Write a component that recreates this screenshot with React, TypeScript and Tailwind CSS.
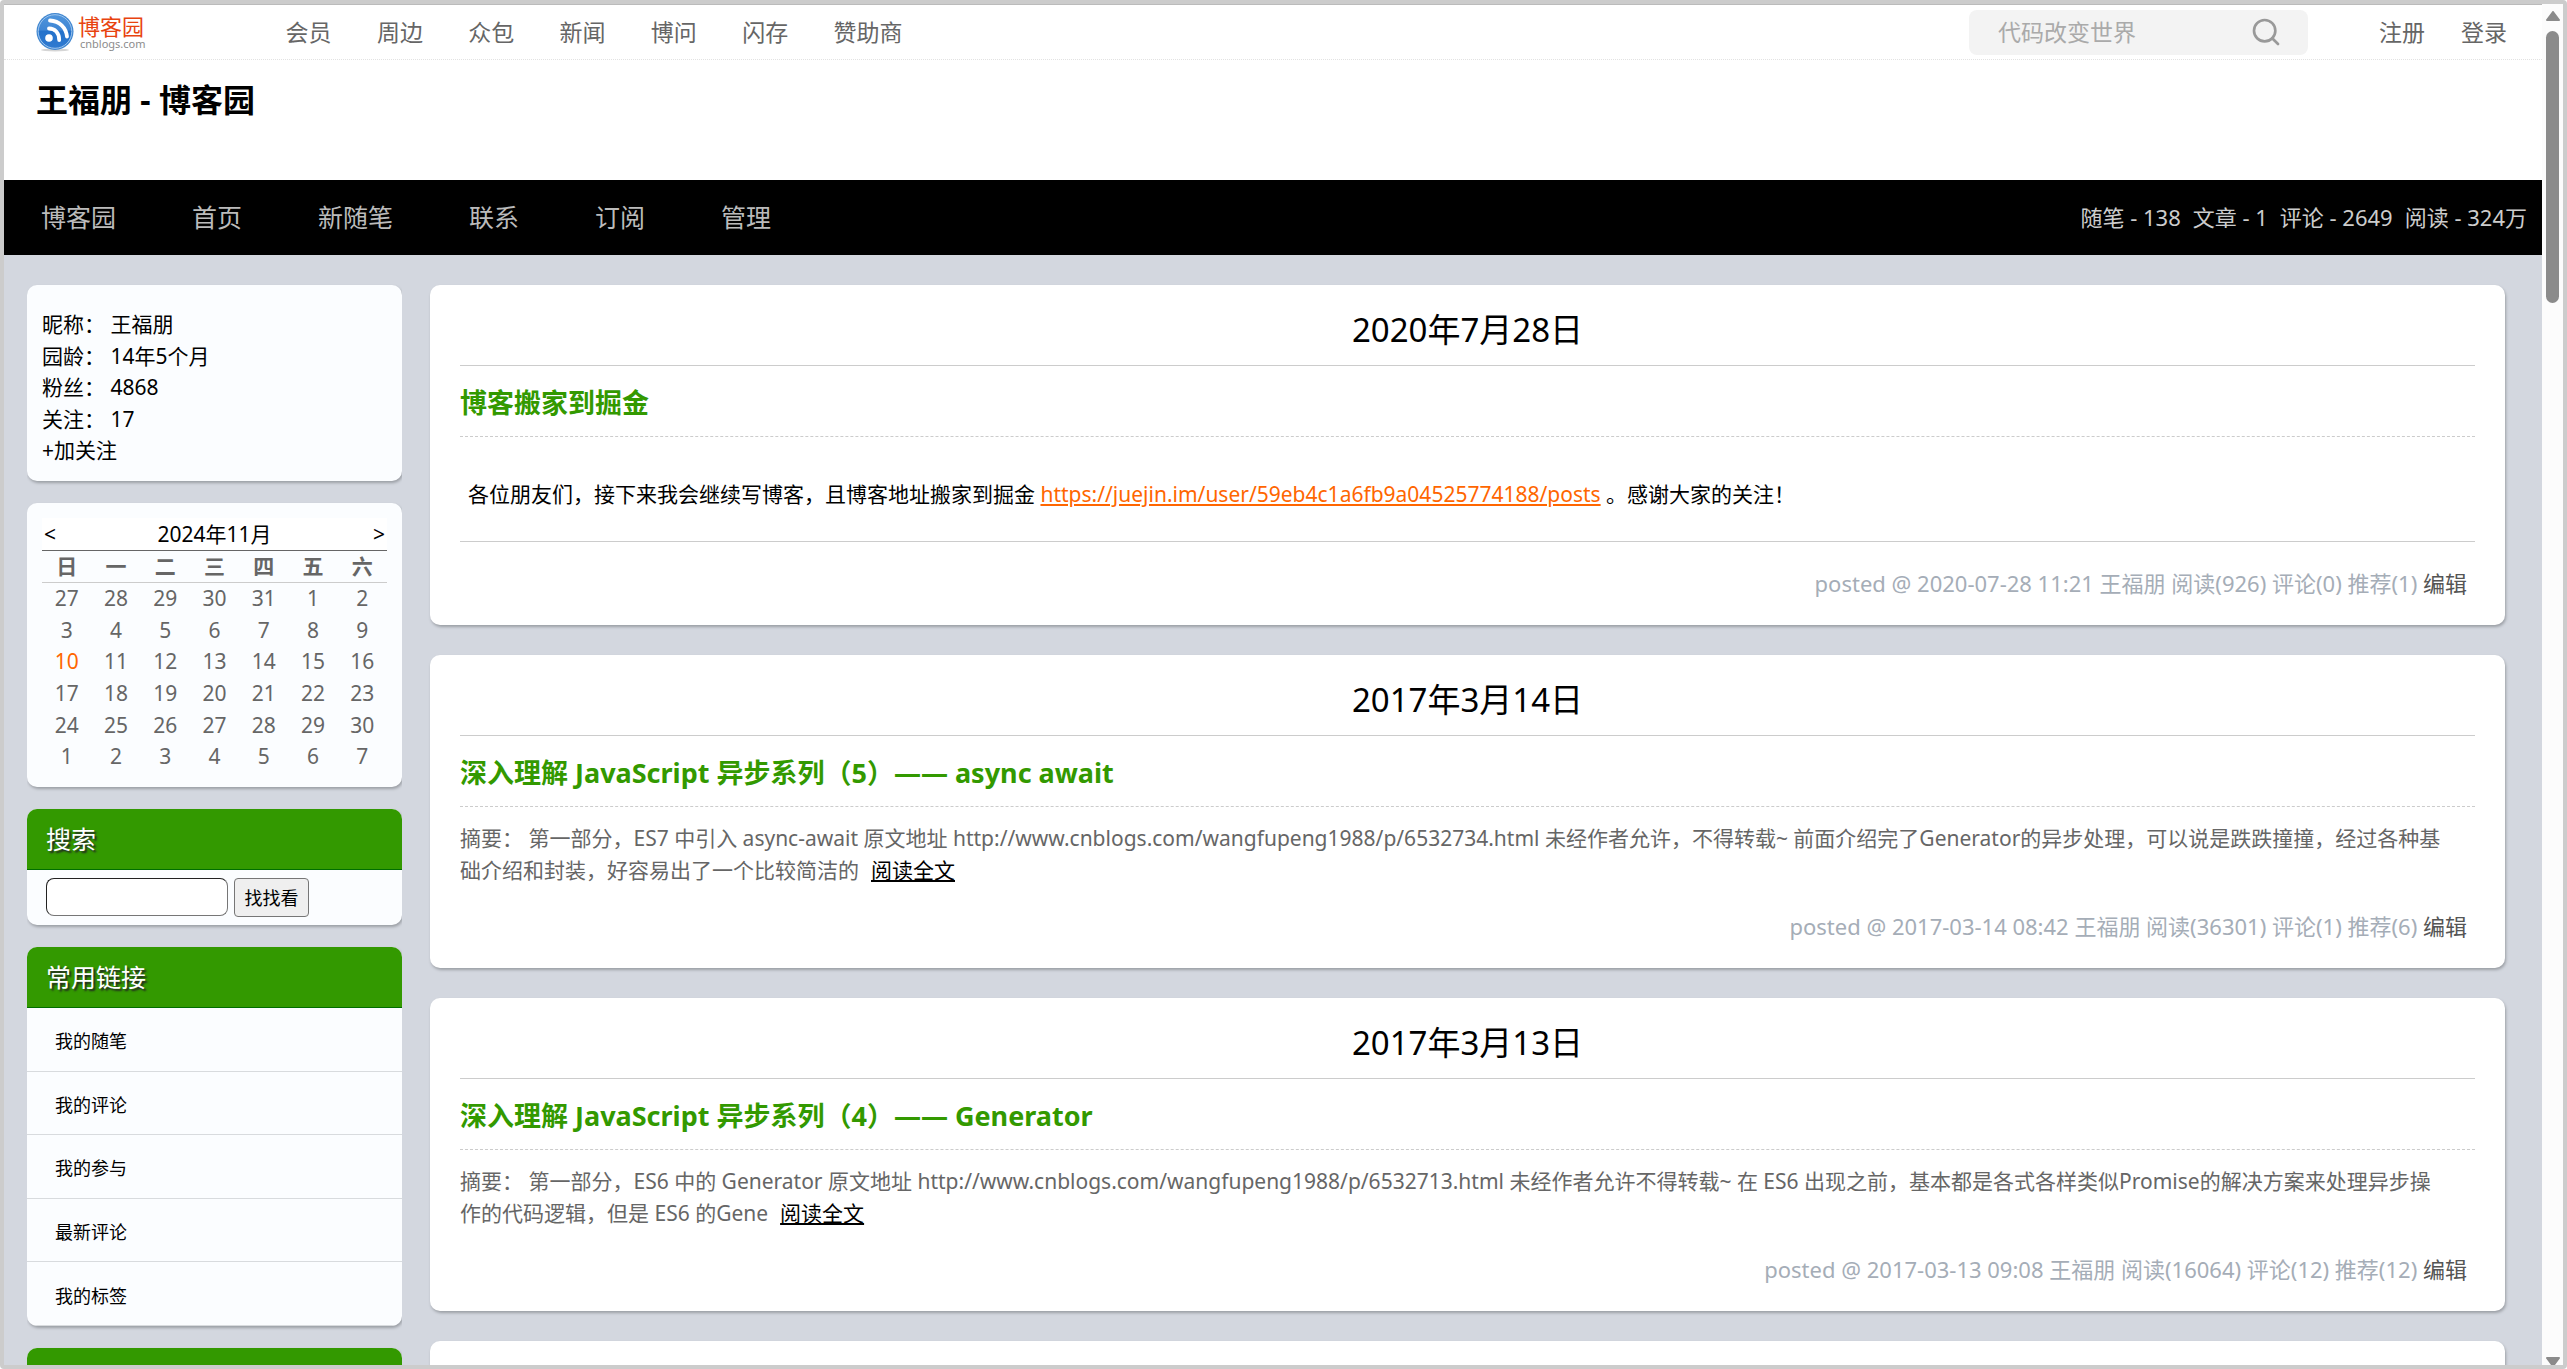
import { Search } from "lucide-react"

const topLinks = ["会员", "周边", "众包", "新闻", "博问", "闪存", "赞助商"]
const navLinks = ["博客园", "首页", "新随笔", "联系", "订阅", "管理"]
const weekdays = ["日", "一", "二", "三", "四", "五", "六"]
const weeks = [
  [27, 28, 29, 30, 31, 1, 2],
  [3, 4, 5, 6, 7, 8, 9],
  [10, 11, 12, 13, 14, 15, 16],
  [17, 18, 19, 20, 21, 22, 23],
  [24, 25, 26, 27, 28, 29, 30],
  [1, 2, 3, 4, 5, 6, 7],
]
const commonLinks = ["我的随笔", "我的评论", "我的参与", "最新评论", "我的标签"]
const profile = [
  ["昵称", "王福朋"],
  ["园龄", "14年5个月"],
  ["粉丝", "4868"],
  ["关注", "17"],
]

type Post = {
  date: string
  title: string
  summary?: string
  footer: string
}

const posts: Post[] = [
  {
    date: "2020年7月28日",
    title: "博客搬家到掘金",
    footer: "posted @ 2020-07-28 11:21 王福朋 阅读(926) 评论(0) 推荐(1)",
  },
  {
    date: "2017年3月14日",
    title: "深入理解 JavaScript 异步系列（5）—— async await",
    summary:
      "摘要： 第一部分，ES7 中引入 async-await 原文地址 http://www.cnblogs.com/wangfupeng1988/p/6532734.html 未经作者允许，不得转载~ 前面介绍完了Generator的异步处理，可以说是跌跌撞撞，经过各种基础介绍和封装，好容易出了一个比较简洁的",
    footer: "posted @ 2017-03-14 08:42 王福朋 阅读(36301) 评论(1) 推荐(6)",
  },
  {
    date: "2017年3月13日",
    title: "深入理解 JavaScript 异步系列（4）—— Generator",
    summary:
      "摘要： 第一部分，ES6 中的 Generator 原文地址 http://www.cnblogs.com/wangfupeng1988/p/6532713.html 未经作者允许不得转载~ 在 ES6 出现之前，基本都是各式各样类似Promise的解决方案来处理异步操作的代码逻辑，但是 ES6 的Gene",
    footer: "posted @ 2017-03-13 09:08 王福朋 阅读(16064) 评论(12) 推荐(12)",
  },
]

function Logo() {
  return (
    <a href="#" className="flex items-center gap-1">
      <svg width="38" height="40" viewBox="0 0 38 40" className="shrink-0">
        <defs>
          <linearGradient id="ball" x1="0" y1="0" x2="0" y2="1">
            <stop offset="0" stopColor="#4f95dc" />
            <stop offset="0.45" stopColor="#3f86d4" />
            <stop offset="0.5" stopColor="#2472cb" />
            <stop offset="1" stopColor="#2f7ad0" />
          </linearGradient>
        </defs>
        <ellipse cx="19" cy="38" rx="14" ry="1.4" fill="#d5d5d5" />
        <circle cx="19" cy="19.5" r="18.5" fill="#3f86d0" />
        <circle cx="19" cy="19.5" r="16.8" fill="url(#ball)" stroke="#a9cdf0" strokeWidth="0.9" />
        <circle cx="13" cy="26" r="3.8" fill="#fff" />
        <path d="M13 16.5c5.8 0 10.2 4.2 10.2 11.5" fill="none" stroke="#fff" strokeWidth="3.8" strokeLinecap="round" />
        <path d="M14 8.5c9.5 0.500 16 7 17 16" fill="none" stroke="#fff" strokeWidth="3.8" strokeLinecap="round" />
      </svg>
      <span className="flex flex-col">
        <span className="text-[22px] leading-6 text-[#e8430f]">博客园</span>
        <span className="pl-0.5 text-[11px] leading-3 text-[#8c8c8c]">cnblogs.com</span>
      </span>
    </a>
  )
}

function TopBar() {
  return (
    <div className="flex h-[55px] items-center border-b border-dotted border-[#e2e2e2] pr-[35px] pl-8 text-[23px] text-[#666]">
      <Logo />
      <nav className="ml-[140px] flex w-[617px] justify-between">
        {topLinks.map((name) => (
          <a key={name} href="#">{name}</a>
        ))}
      </nav>
      <form className="mr-[71px] ml-auto flex h-[45px] w-[339px] items-center rounded-lg bg-[#f3f3f3] pr-[26px] pl-[29px]">
        <input
          aria-label="代码改变世界"
          placeholder="代码改变世界"
          className="min-w-0 flex-1 bg-transparent outline-none placeholder:text-[#aaa]"
        />
        <button type="button" aria-label="搜索">
          <Search className="h-8 w-8 text-[#999]" strokeWidth={2} />
        </button>
      </form>
      <div className="flex gap-9">
        <a href="#">注册</a>
        <a href="#">登录</a>
      </div>
    </div>
  )
}

function NavBar() {
  return (
    <div className="flex h-[75px] items-center justify-between bg-black pr-[15px] pl-[37px]">
      <nav className="flex gap-[76px] text-[25px] text-[#bbb]">
        {navLinks.map((name) => (
          <a key={name} href="#">{name}</a>
        ))}
      </nav>
      <div className="flex gap-3 text-[22px] text-[#ccc]">
        <span>随笔 - 138</span>
        <span>文章 - 1</span>
        <span>评论 - 2649</span>
        <span>阅读 - 324万</span>
      </div>
    </div>
  )
}

const cardShadow = "shadow-[1px_2px_3px_#9b9fa5]"

function SideHeading({ children }: { children?: string }) {
  return (
    <h3 className="h-[61px] border-b border-[#006e00] bg-[#339900] pl-[19px] text-[25px] leading-[60px] text-white [text-shadow:2px_2px_2px_#222]">
      {children}
    </h3>
  )
}

function Calendar() {
  return (
    <div className={`rounded-[10px] bg-[#fbfdff] p-[15px] ${cardShadow}`}>
      <table className="h-[254px] w-full table-fixed border-collapse text-center text-[21px] leading-7 text-[#666]">
        <thead>
          <tr className="h-8 border-b border-[#666] bg-white text-black">
            <td className="pl-0.5 text-left"><a href="#">&lt;</a></td>
            <td colSpan={5}>2024年11月</td>
            <td className="pr-0.5 text-right"><a href="#">&gt;</a></td>
          </tr>
          <tr className="h-8 border-b border-[#ccc]">
            {weekdays.map((day) => (
              <th key={day} className="font-bold">{day}</th>
            ))}
          </tr>
        </thead>
        <tbody>
          {weeks.map((week, i) => (
            <tr key={i}>
              {week.map((day) => (
                <td key={day} className={i === 2 && day === 10 ? "text-[#ff6600]" : ""}>{day}</td>
              ))}
            </tr>
          ))}
        </tbody>
      </table>
    </div>
  )
}

function Sidebar() {
  return (
    <aside className="flex w-[375px] shrink-0 flex-col gap-[22px] overflow-x-clip">
      <div className={`rounded-[10px] bg-[#fbfdff] px-[15px] pt-6 pb-3.5 ${cardShadow}`}>
        <ul className="grid h-[158px] text-[21px] leading-[31px]">
          {profile.map(([label, value]) => (
            <li key={label}>{label}： <a href="#">{value}</a></li>
          ))}
          <li><a href="#">+加关注</a></li>
        </ul>
      </div>

      <Calendar />

      <div className={`overflow-hidden rounded-[10px] bg-[#fbfdff] ${cardShadow}`}>
        <SideHeading>搜索</SideHeading>
        <form className="flex gap-1.5 px-[19px] py-2">
          <input
            aria-label="搜索"
            className="h-[38px] w-[182px] rounded-lg border border-[#767676] border-t-[#222] border-l-[#222] bg-white px-2 text-lg"
          />
          <button type="button" className="h-[39px] w-[75px] rounded-[4px] border border-[#767676] bg-[#efefef] text-lg leading-9">
            找找看
          </button>
        </form>
      </div>

      <div className={`overflow-hidden rounded-[10px] bg-[#fbfdff] ${cardShadow}`}>
        <SideHeading>常用链接</SideHeading>
        <ul className="grid h-[318px] grid-rows-5 text-lg">
          {commonLinks.map((name) => (
            <li key={name} className="flex items-center border-b border-[#d8dbde] pt-1 pl-7">
              <a href="#">{name}</a>
            </li>
          ))}
        </ul>
      </div>

      <div className={`overflow-hidden rounded-[10px] bg-[#fbfdff] ${cardShadow}`}>
        <SideHeading />
      </div>
    </aside>
  )
}

function PostCard({ post }: { post: Post }) {
  return (
    <article className={`rounded-[10px] bg-white px-[30px] pt-[21px] pb-[26px] text-[21px] leading-8 ${cardShadow}`}>
      <h2 className="border-b border-[#ccc] pb-[11px] text-center text-[33px] leading-[48px]">{post.date}</h2>
      <h3 className="border-b border-dashed border-[#ccc] pt-[7px] pb-[3px] text-[27px] leading-[60px] font-bold text-[#339900]">
        <a href="#">{post.title}</a>
      </h3>
      {post.summary ? (
        <p className="pt-[15px] pr-7 pb-px text-[#666]">
          {post.summary}
          <a href="#" className="ml-3 text-black underline">阅读全文</a>
        </p>
      ) : (
        <p className="mb-0.5 border-b border-[#ccc] px-2 pt-[41px] pb-[31px]">
          各位朋友们，接下来我会继续写博客，且博客地址搬家到掘金{" "}
          <a href="#" className="text-[#ff6600] underline">
            https://juejin.im/user/59eb4c1a6fb9a04525774188/posts
          </a>{" "}
          。感谢大家的关注！
        </p>
      )}
      <p className="pt-[23px] pr-2 text-right text-[22px] text-[#a5adb7]">
        {post.footer} <a href="#" className="text-[#555]">编辑</a>
      </p>
    </article>
  )
}

function ScrollBar() {
  return (
    <div className="flex w-[21px] shrink-0 flex-col items-center bg-[#fcfcfc] pt-[7px]">
      <svg width="14" height="10" viewBox="0 0 14 10">
        <path d="M7 1L13 9H1z" fill="#8b8b8b" stroke="#8b8b8b" strokeWidth="2" strokeLinejoin="round" />
      </svg>
      <div className="mt-2.5 h-[272px] w-[13px] rounded-full bg-[#8b8b8b]" />
      <svg width="14" height="8" viewBox="0 0 14 8" className="mt-auto">
        <path d="M1 1h12L7 9z" fill="#8b8b8b" stroke="#8b8b8b" strokeWidth="2" strokeLinejoin="round" />
      </svg>
    </div>
  )
}

export default function App() {
  return (
    <div className="flex h-screen overflow-hidden rounded-sm border-4 border-[#ccc] bg-white font-['Noto_Sans','Noto_Sans_CJK_SC',sans-serif] text-black">
      <div className="min-w-0 flex-1 overflow-hidden border-t border-[#bbb] bg-[#d3d7df]">
        <header className="bg-white">
          <TopBar />
          <h1 className="h-[120px] pt-4 pl-8 text-[32px] leading-[48px] font-bold">王福朋 - 博客园</h1>
        </header>
        <NavBar />
        <div className="flex items-start gap-7 pt-[30px] pr-[37px] pl-[23px]">
          <Sidebar />
          <main className="flex min-w-0 flex-1 flex-col gap-[30px]">
            {posts.map((post) => (
              <PostCard key={post.date} post={post} />
            ))}
            <div className={`h-20 rounded-[10px] bg-white ${cardShadow}`} />
          </main>
        </div>
      </div>
      <ScrollBar />
    </div>
  )
}
